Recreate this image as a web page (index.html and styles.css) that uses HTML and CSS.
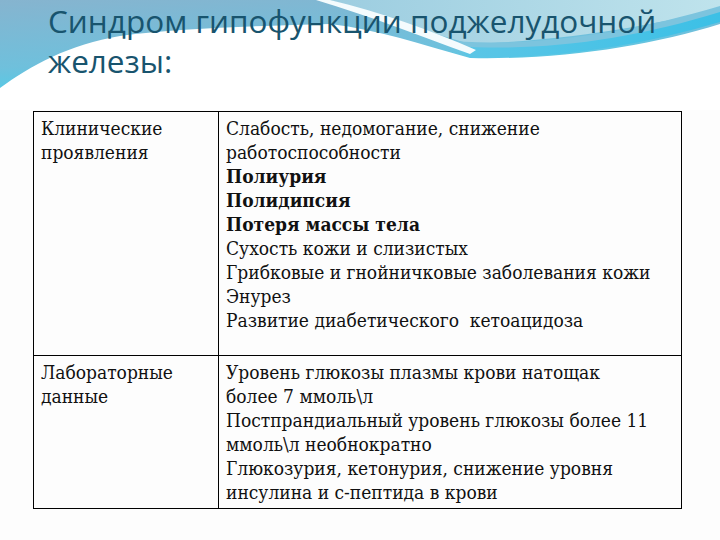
FILE: index.html
```html
<!DOCTYPE html>
<html lang="ru">
<head>
<meta charset="utf-8">
<title>Синдром гипофункции поджелудочной железы</title>
<link rel="stylesheet" href="styles.css">
</head>
<body>
<div class="slide">
  <svg class="deco" width="720" height="110" viewBox="0 0 720 110" aria-hidden="true">
    <defs>
      <linearGradient id="gl" x1="0" y1="0" x2="0.35" y2="1">
        <stop offset="0" stop-color="#86b4cf"/>
        <stop offset="0.55" stop-color="#6fc0dc"/>
        <stop offset="1" stop-color="#36d6f2"/>
      </linearGradient>
      <linearGradient id="gr" x1="0" y1="0" x2="1" y2="0">
        <stop offset="0" stop-color="#9ccde0"/>
        <stop offset="1" stop-color="#bfe3ec"/>
      </linearGradient>
      <linearGradient id="gs" x1="0" y1="0" x2="1" y2="0">
        <stop offset="0" stop-color="#5cc6e6"/>
        <stop offset="1" stop-color="#3cc0e6"/>
      </linearGradient>
    </defs>
    <rect x="0" y="0" width="720" height="110" fill="url(#gl)"/>
    <path d="M330,0 H720 V8 C640,30 540,42 470,44 C420,30 370,12 330,0 Z" fill="url(#gr)"/>
    <path d="M440,40 C520,48 620,36 720,6 V20 C640,44 560,56 470,56 Z" fill="#7cc4de"/>
    <path d="M455,46 C540,52 630,40 720,12 V22 C640,46 560,58 470,58 Z" fill="url(#gs)"/>
    <path d="M0,88 C30,66 70,44 120,36 C180,28 260,26 330,24 C380,30 420,44 470,58 C560,60 650,46 720,24 V110 H0 Z" fill="#ffffff"/>
    <path d="M316,0 H330 C380,12 430,30 476,50 L470,54 C420,36 370,16 316,0 Z" fill="#f4fbfd"/>
  </svg>

  <h1 class="title">Синдром гипофункции поджелудочной<br>железы:</h1>

  <table class="grid">
    <tr>
      <td class="head">Клинические проявления</td>
      <td class="body first">
        Слабость, недомогание, снижение<br>
        работоспособности<br>
        <b>Полиурия</b><br>
        <b>Полидипсия</b><br>
        <b>Потеря массы тела</b><br>
        Сухость кожи и слизистых<br>
        Грибковые и гнойничковые заболевания кожи<br>
        Энурез<br>
        Развитие диабетического&nbsp; кетоацидоза
      </td>
    </tr>
    <tr>
      <td class="head">Лабораторные данные</td>
      <td class="body last">
        Уровень глюкозы плазмы крови натощак<br>
        более 7 ммоль\л<br>
        Постпрандиальный уровень глюкозы более 11<br>
        ммоль\л необнократно<br>
        Глюкозурия, кетонурия, снижение уровня<br>
        инсулина и с-пептида в крови
      </td>
    </tr>
  </table>
</div>
</body>
</html>
```

FILE: styles.css
```css
html, body {
  margin: 0;
  padding: 0;
  background: #ffffff;
}

.slide {
  position: relative;
  width: 720px;
  height: 540px;
  overflow: hidden;
  background: #fdfdfd;
}

.deco {
  position: absolute;
  left: 0;
  top: 0;
  z-index: 0;
}

.title {
  position: relative;
  z-index: 1;
  margin: 0;
  padding: 1px 0 0 48px;
  font-family: "Open Sans", "Noto Sans", sans-serif;
  font-weight: 400;
  font-size: 31.5px;
  line-height: 40px;
  color: #18546e;
}

.grid {
  position: relative;
  z-index: 1;
  margin: 30px 0 0 33px;
  width: 649px;
  border-collapse: collapse;
  font-family: "DejaVu Serif Condensed", "DejaVu Serif", serif;
  font-size: 19px;
  line-height: 24px;
  color: #111111;
}

.grid td {
  border: 1px solid #000000;
  vertical-align: top;
  padding: 4px 7px 2px 7px;
}

.grid .head {
  width: 170px;
}

.grid .first {
  padding-bottom: 23px;
}

.grid .last {
  padding-bottom: 4px;
}
```
